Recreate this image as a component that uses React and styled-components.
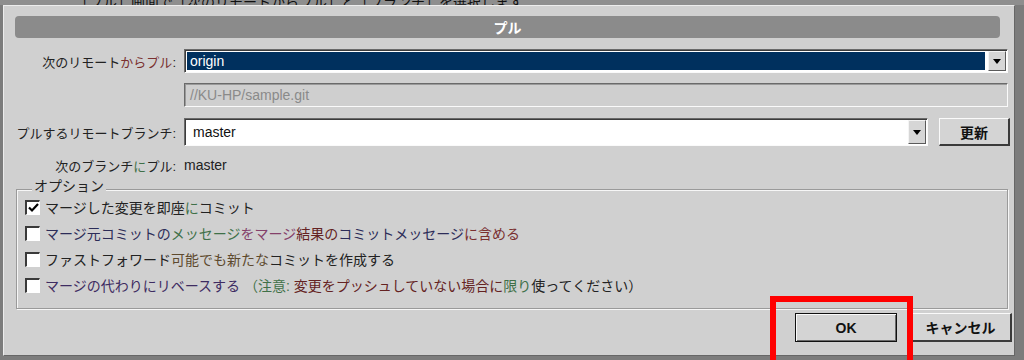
import React from "react";
import styled, { createGlobalStyle } from "styled-components";

const Global = createGlobalStyle`
  html, body {
    margin: 0;
    background: #7c7c7c;
    overflow: hidden;
  }
  body {
    font-family: "Liberation Sans", "Noto Sans CJK JP", sans-serif;
    font-size: 14px;
    color: #222;
  }
`;

const tones = {
  red: "#7a3030",
  green: "#3f7048",
  navy: "#2c2c58",
  pink: "#84406a",
  wine: "#642222",
  brown: "#5e4a2e",
  purple: "#3e2c62",
};

const Page = styled.div`
  width: 1024px;
  height: 360px;
  display: flex;
  flex-direction: column;
`;

const TopStrip = styled.div`
  height: 5px;
  overflow: hidden;
  display: flex;
  align-items: flex-end;
  padding-left: 75px;
  background: #8e8e8e;
`;

const TopText = styled.span`
  margin-bottom: -4px;
  color: #111;
  font-size: 14px;
  line-height: 14px;
  white-space: nowrap;
`;

const Frame = styled.div`
  display: flex;
  padding-left: 3px;
`;

const Dialog = styled.div`
  position: relative;
  box-sizing: border-box;
  width: 1012px;
  height: 351px;
  padding-top: 10px;
  background: #d0d0d0;
  border-style: solid;
  border-width: 1px;
  border-color: #ececec #666 #666 #ececec;
  display: flex;
  flex-direction: column;
`;

const TitleBar = styled.div`
  height: 22px;
  margin: 0 14px 0 11px;
  border-radius: 4px;
  background: #8b8b8b;
  color: #fff;
  font-weight: bold;
  font-size: 14px;
  display: flex;
  align-items: center;
  justify-content: center;
`;

const Form = styled.div`
  margin-top: 11px;
  display: flex;
  flex-direction: column;
`;

const Row = styled.div`
  display: flex;
  align-items: center;
  height: ${(p) => p.$h}px;
  margin-top: ${(p) => p.$top || 0}px;
  margin-right: ${(p) => (p.$right == null ? 6 : p.$right)}px;
`;

const Label = styled.div`
  width: 172px;
  flex-shrink: 0;
  margin-right: 8px;
  text-align: right;
  white-space: nowrap;
  font-size: 13px;
  color: #222;
`;

const Tint = styled.span`
  color: ${(p) => tones[p.$t]};
`;

const Combo = styled.div`
  flex: 1;
  align-self: stretch;
  display: flex;
  box-sizing: border-box;
  border-style: solid;
  border-width: 1px;
  border-color: #6a6a6a #fafafa #fafafa #6a6a6a;
  box-shadow: inset 1px 1px 0 #3c3c3c;
  background: #fff;
  padding: 1px 1px 1px 2px;
`;

const Value = styled.div`
  flex: 1;
  display: flex;
  align-items: center;
  padding-left: ${(p) => (p.$selected ? 3 : 6)}px;
  margin: ${(p) => (p.$selected ? "1px 3px 1px 0" : "0")};
  background: ${(p) => (p.$selected ? "#00305e" : "#fff")};
  color: ${(p) => (p.$selected ? "#fff" : "#111")};
  font-size: 14px;
`;

const DropButton = styled.div`
  width: 18px;
  box-sizing: border-box;
  display: flex;
  align-items: center;
  justify-content: center;
  background: #d6d6d6;
  border-style: solid;
  border-width: 1px;
  border-color: #f4f4f4 #5a5a5a #5a5a5a #f4f4f4;
`;

const Field = styled.div`
  flex: 1;
  align-self: stretch;
  display: flex;
  align-items: center;
  box-sizing: border-box;
  padding-left: 5px;
  border-style: solid;
  border-width: 1px;
  border-color: #6a6a6a #fafafa #fafafa #6a6a6a;
  box-shadow: inset 1px 1px 0 #9a9a9a;
  background: #cfcfcf;
  color: #8a8a8a;
  font-size: 14px;
`;

const PlainValue = styled.div`
  color: #222;
  font-size: 14px;
`;

const Button = styled.button`
  box-sizing: border-box;
  width: ${(p) => p.$w}px;
  height: ${(p) => p.$h}px;
  margin: 0 0 0 ${(p) => p.$gap || 0}px;
  padding: 0;
  font-family: "Liberation Sans", "Noto Sans CJK JP", sans-serif;
  font-size: 14px;
  font-weight: bold;
  color: #111;
  background: #d4d4d4;
  border-style: solid;
  border-width: ${(p) => (p.$default ? "1px" : "1px 2px 2px 1px")};
  border-color: ${(p) =>
    p.$default ? "#111" : "#fafafa #3a3a3a #3a3a3a #fafafa"};
  box-shadow: ${(p) =>
    p.$default ? "inset 1px 1px 0 #fafafa, inset -1px -1px 0 #6a6a6a" : "none"};
`;

const Options = styled.fieldset`
  margin: 6px 6px 0 12px;
  padding: 0 0 10px 8px;
  height: 128px;
  box-sizing: border-box;
  border: 1px solid #9a9a9a;
  box-shadow: inset 1px 1px 0 #f6f6f6, 1px 1px 0 #f6f6f6;
`;

const Legend = styled.legend`
  margin-left: 7px;
  padding: 0 2px 6px;
  line-height: 10px;
  font-size: 14px;
  color: #222;
  background: #d0d0d0;
`;

const OptionList = styled.div`
  margin-top: -3px;
  display: flex;
  flex-direction: column;
`;

const Option = styled.label`
  height: 26px;
  display: flex;
  align-items: center;
  gap: 5px;
  white-space: nowrap;
  color: #222;
`;

const Box = styled.span`
  width: 15px;
  height: 15px;
  box-sizing: border-box;
  flex-shrink: 0;
  display: flex;
  align-items: center;
  justify-content: center;
  background: #fff;
  border-style: solid;
  border-width: 2px 1px 1px 2px;
  border-color: #3a3a3a #fff #fff #3a3a3a;
`;

const ButtonRow = styled.div`
  margin-top: 4px;
  padding-right: 2px;
  display: flex;
  justify-content: flex-end;
  gap: 13px;
`;

const Marked = styled.div`
  position: relative;
`;

const Highlight = styled.div`
  position: absolute;
  left: -25px;
  top: -17px;
  width: 143px;
  height: 70px;
  box-sizing: border-box;
  border: 6px solid #ff0000;
  pointer-events: none;
`;

const BottomStrip = styled.div`
  flex: 1;
  background: #7c7c7c;
`;

function Arrow() {
  return (
    <svg width="8" height="5" viewBox="0 0 8 5">
      <path d="M0 0 H8 L4 5 Z" fill="#000" />
    </svg>
  );
}

function Check({ checked }) {
  return (
    <Box>
      {checked && (
        <svg width="11" height="10" viewBox="0 0 11 10">
          <path d="M1 4.5 L4 7.5 L10 1" stroke="#000" strokeWidth="2.2" fill="none" />
        </svg>
      )}
    </Box>
  );
}

export default function App() {
  return (
    <Page>
      <Global />
      <TopStrip>
        <TopText>「プル」画面で「次のリモートからプル」と「ブランチ」を選択します</TopText>
      </TopStrip>
      <Frame>
        <Dialog>
          <TitleBar>プル</TitleBar>
          <Form>
            <Row $h={24}>
              <Label>
                次のリモート<Tint $t="red">からプル</Tint>:
              </Label>
              <Combo>
                <Value $selected>origin</Value>
                <DropButton>
                  <Arrow />
                </DropButton>
              </Combo>
            </Row>
            <Row $h={24} $top={10}>
              <Label />
              <Field>//KU-HP/sample.git</Field>
            </Row>
            <Row $h={28} $top={11} $right={4}>
              <Label>プルするリモートブランチ:</Label>
              <Combo>
                <Value>master</Value>
                <DropButton>
                  <Arrow />
                </DropButton>
              </Combo>
              <Button $w={71} $h={28} $gap={11}>
                更新
              </Button>
            </Row>
            <Row $h={20} $top={9}>
              <Label>
                次のブランチ<Tint $t="green">に</Tint>プル:
              </Label>
              <PlainValue>master</PlainValue>
            </Row>
          </Form>

          <Options>
            <Legend>オプション</Legend>
            <OptionList>
              <Option>
                <Check checked />
                <span>
                  マージした変更を即座<Tint $t="green">に</Tint>コミット
                </span>
              </Option>
              <Option>
                <Check />
                <span>
                  <Tint $t="navy">マージ元コミットの</Tint>
                  <Tint $t="green">メッセージ</Tint>
                  <Tint $t="pink">をマージ</Tint>
                  <Tint $t="wine">結果の</Tint>
                  <Tint $t="navy">コミットメッセージ</Tint>
                  <Tint $t="red">に含める</Tint>
                </span>
              </Option>
              <Option>
                <Check />
                <span>
                  ファストフォワード<Tint $t="brown">可能でも新たな</Tint>コミットを作成する
                </span>
              </Option>
              <Option>
                <Check />
                <span>
                  <Tint $t="purple">マージの代わりにリベースする</Tint>
                  <Tint $t="green"> （注意: </Tint>
                  <Tint $t="wine">変更をプッシュしていない場合に</Tint>
                  <Tint $t="green">限り</Tint>
                  使ってください）
                </span>
              </Option>
            </OptionList>
          </Options>

          <ButtonRow>
            <Marked>
              <Button $w={102} $h={29} $default>
                OK
              </Button>
              <Highlight />
            </Marked>
            <Button $w={102} $h={29}>
              キャンセル
            </Button>
          </ButtonRow>
        </Dialog>
      </Frame>
      <BottomStrip />
    </Page>
  );
}
